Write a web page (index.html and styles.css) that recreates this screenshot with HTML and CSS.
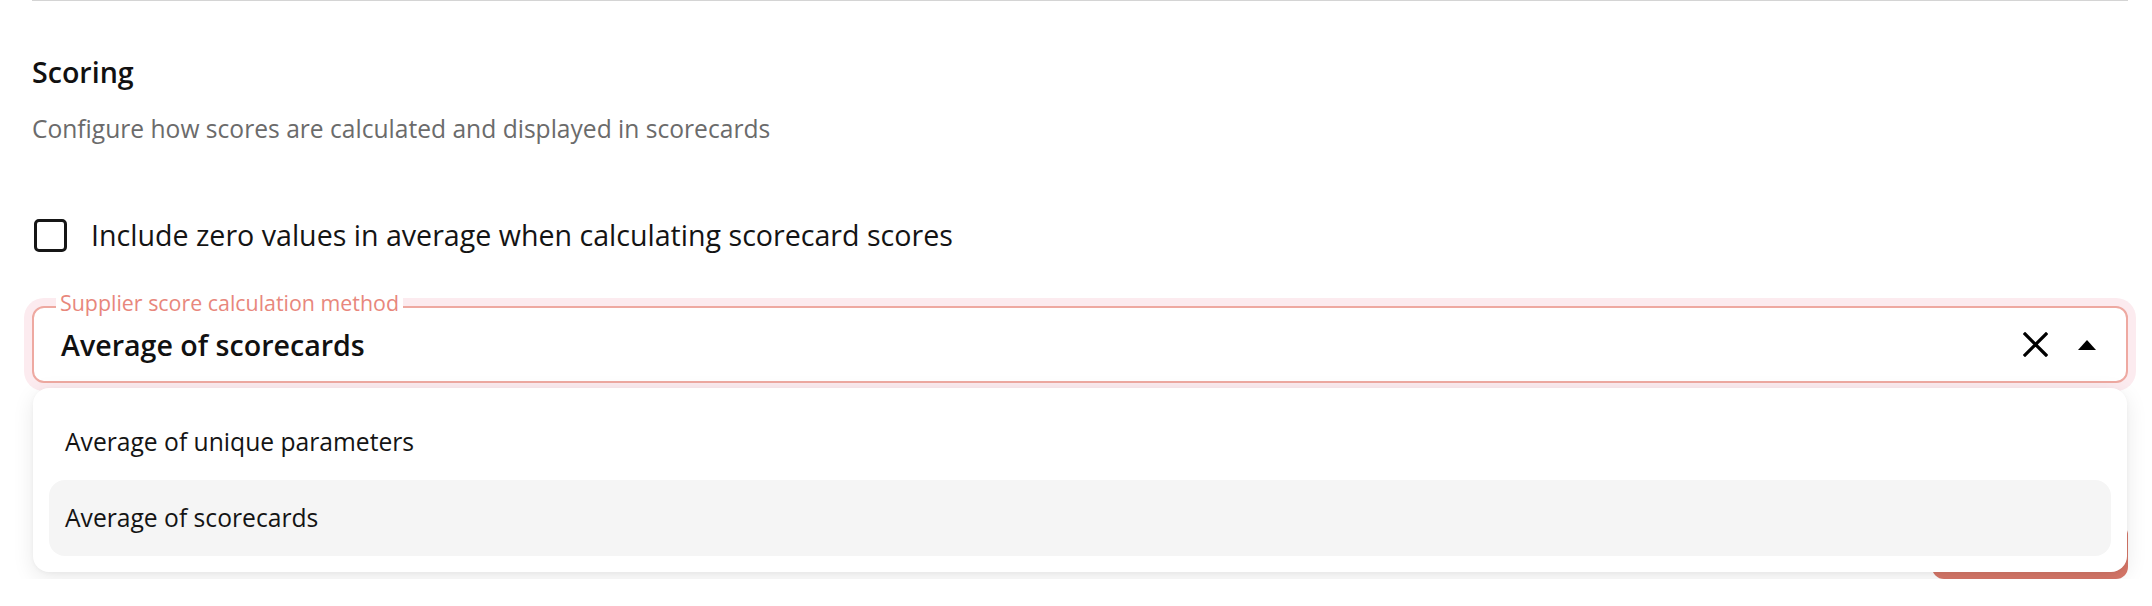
FILE: index.html
```html
<!DOCTYPE html>
<html lang="en">
<head>
<meta charset="utf-8">
<title>Scoring</title>
<link rel="stylesheet" href="styles.css">
</head>
<body>
<div class="page">
  <div class="divider"></div>
  <h2 class="title">Scoring</h2>
  <p class="subtitle">Configure how scores are calculated and displayed in scorecards</p>
  <label class="check-row">
    <span class="checkbox"></span>
    <span class="check-label">Include zero values in average when calculating scorecard scores</span>
  </label>
  <div class="field-wrap">
    <div class="field">
      <span class="legend">Supplier score calculation method</span>
      <span class="value">Average of scorecards</span>
      <span class="icons">
        <svg class="icon-x" width="25" height="25" viewBox="0 0 25 25"><path d="M2 2L23 23M23 2L2 23" stroke="#000" stroke-width="3.2" stroke-linecap="square" fill="none"/></svg>
        <svg class="icon-caret" width="18" height="10" viewBox="0 0 18 10"><path d="M0 10L9 0L18 10Z" fill="#000"/></svg>
      </span>
    </div>
    <div class="menu">
      <div class="option">Average of unique parameters</div>
      <div class="option selected">Average of scorecards</div>
    </div>
  </div>
  <div class="actions">
    <button class="btn">Save</button>
  </div>
</div>
</body>
</html>
```
FILE: styles.css
```css
html, body {
  margin: 0;
  padding: 0;
  background: #ffffff;
}
body {
  font-family: "Open Sans", "Noto Sans", sans-serif;
  color: #141414;
}
.page {
  padding: 0 24px 0 32px;
}
.divider {
  border-top: 1px solid #d4d4d4;
}
.title {
  margin: 51px 0 0 0;
  font-size: 28.6px;
  line-height: 40px;
  font-weight: 600;
  color: #111111;
}
.subtitle {
  margin: 19px 0 0 0;
  font-size: 24.6px;
  line-height: 36px;
  font-weight: 400;
  color: #6b6b6b;
}
.check-row {
  margin-top: 68px;
  display: flex;
  align-items: center;
  gap: 24px;
  height: 40px;
  padding-left: 2px;
}
.checkbox {
  width: 33px;
  height: 33px;
  box-sizing: border-box;
  border: 3.5px solid #161616;
  border-radius: 5px;
  flex: none;
}
.check-label {
  font-size: 28.6px;
  line-height: 40px;
  color: #141414;
}
.field-wrap {
  position: relative;
  margin-top: 51px;
}
.field {
  position: relative;
  height: 77px;
  box-sizing: border-box;
  border: 2px solid #eea9a1;
  border-radius: 12px;
  box-shadow: 0 0 0 8px #fcebef;
  display: flex;
  align-items: center;
  padding: 0 30px 0 27px;
  background: #ffffff;
}
.legend {
  position: absolute;
  top: -16px;
  left: 22px;
  padding: 0 4px;
  background: #ffffff;
  font-size: 21.4px;
  line-height: 22px;
  color: #e8877c;
}
.value {
  flex: 1;
  font-size: 28.6px;
  line-height: 40px;
  font-weight: 600;
  color: #111111;
}
.icons {
  display: flex;
  align-items: center;
  gap: 30px;
}
.icons svg {
  display: block;
}
.menu {
  position: absolute;
  top: calc(100% + 5px);
  left: 1px;
  right: 1px;
  z-index: 2;
  background: #ffffff;
  border-radius: 16px;
  box-shadow: 0 6px 22px rgba(0, 0, 0, 0.09), 0 1px 4px rgba(0, 0, 0, 0.04);
  padding: 16px;
}
.option {
  height: 76px;
  line-height: 76px;
  padding: 0 16px;
  border-radius: 16px;
  font-size: 24.65px;
  color: #141414;
}
.option.selected {
  background: #f5f5f5;
}
.actions {
  margin-top: 140px;
  display: flex;
  justify-content: flex-end;
}
.btn {
  width: 196px;
  height: 56px;
  border: none;
  border-radius: 12px;
  background: #d77769;
  color: #ffffff;
  font-family: "Open Sans", sans-serif;
  font-size: 22px;
  font-weight: 600;
}
```
